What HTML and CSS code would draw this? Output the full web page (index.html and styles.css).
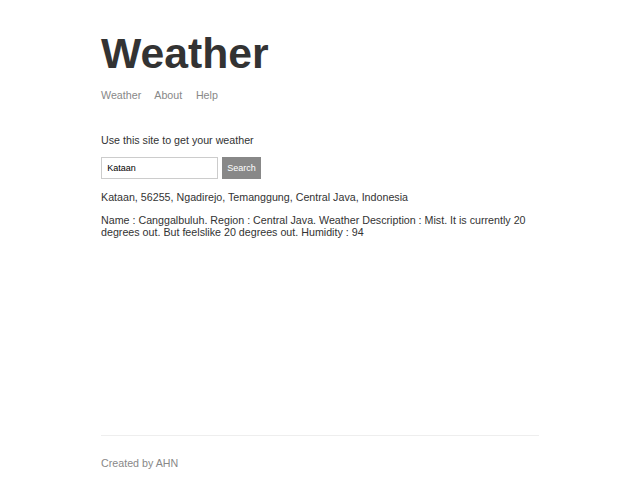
FILE: index.html
```html
<!DOCTYPE html>
<html>
<head>
<meta charset="utf-8">
<title>Weather</title>
<link rel="stylesheet" href="styles.css">
</head>
<body>
<div class="main-content">
  <header>
    <h1>Weather</h1>
    <div class="nav">
      <a href="#">Weather</a>
      <a href="#">About</a>
      <a href="#">Help</a>
    </div>
  </header>
  <p class="intro">Use this site to get your weather</p>
  <form class="search">
    <input type="text" value="Kataan">
    <button type="button">Search</button>
  </form>
  <p class="msg">Kataan, 56255, Ngadirejo, Temanggung, Central Java, Indonesia</p>
  <p class="msg">Name : Canggalbuluh. Region : Central Java. Weather Description : Mist. It is currently 20 degrees out. But feelslike 20 degrees out. Humidity : 94</p>
</div>
<footer>
  <p>Created by AHN</p>
</footer>
</body>
</html>
```
FILE: styles.css
```css
body {
  color: #333333;
  font-family: "Liberation Sans", Arial, sans-serif;
  font-size: 10.7px;
  max-width: 438px;
  margin: 0 auto;
  padding: 0 10.7px;
  display: flex;
  flex-direction: column;
  min-height: 100vh;
  box-sizing: content-box;
}
.main-content {
  flex-grow: 1;
}
header {
  margin-top: 10.7px;
  margin-bottom: 33px;
}
h1 {
  font-size: 42.7px;
  margin: 28.6px 0 11.5px 0;
}
.nav a {
  color: #888888;
  margin-right: 10.7px;
  text-decoration: none;
}
p {
  margin: 11.5px 0;
}
.intro {
  margin-bottom: 10.5px;
}
.search {
  display: flex;
  gap: 4px;
}
input {
  font-family: "Liberation Sans", Arial, sans-serif;
  font-size: 9px;
  border: 1px solid #cccccc;
  padding: 5.3px;
  width: 104px;
  color: #000;
}
button {
  font-family: "Liberation Sans", Arial, sans-serif;
  font-size: 9px;
  border: 1px solid #888888;
  background: #888888;
  color: #ffffff;
  padding: 5.3px 4.6px;
}
footer {
  color: #888888;
  border-top: 1px solid #eeeeee;
  margin-top: 10.7px;
  padding: 8.7px 0 3px 0;
}
footer p {
  margin: 11.5px 0 8.5px 0;
}
```
